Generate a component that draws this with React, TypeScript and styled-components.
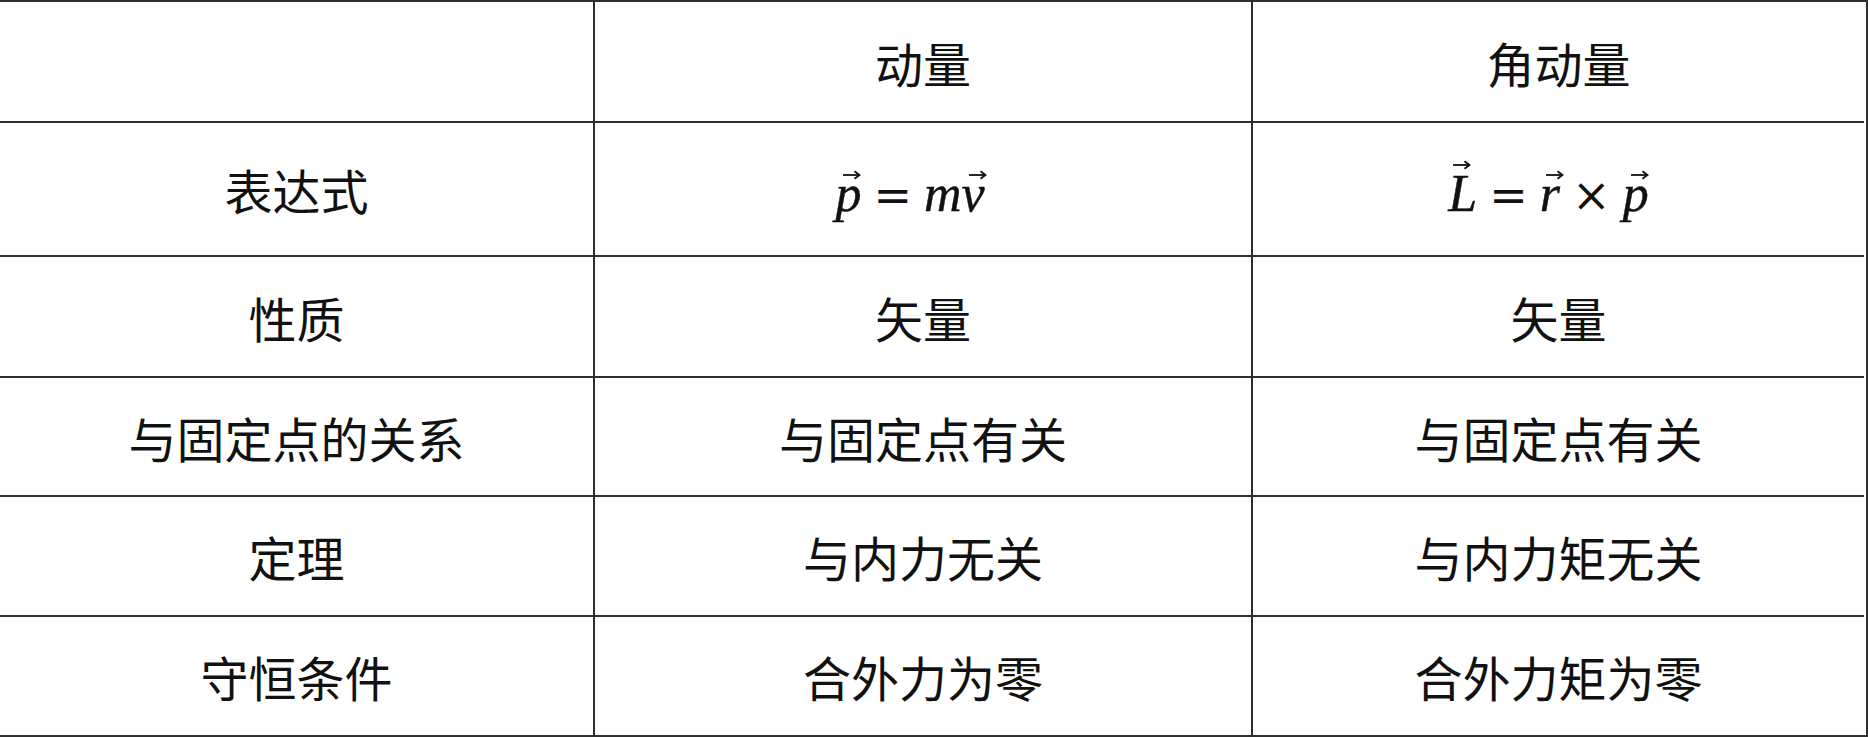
import React from "react";
import styled, { createGlobalStyle } from "styled-components";

const Global = createGlobalStyle`
  html, body { margin: 0; padding: 0; background: #ffffff; }
  body { font-family: "Noto Sans CJK SC", "Noto Sans", sans-serif; color: #111; }
`;

const LINE = "#2e2e2e";

const Table = styled.div`
  box-sizing: border-box;
  width: 1868px;
  height: 737px;
  display: grid;
  grid-template-columns: 595px 658px 611px;
  grid-template-rows: 121px 134px 121px 119px 120px 118px;
  border-top: 2px solid ${LINE};
  border-right: 2px solid ${LINE};
  border-bottom: 2px solid ${LINE};
`;

const Cell = styled.div<{ $lastCol?: boolean; $lastRow?: boolean }>`
  box-sizing: border-box;
  display: flex;
  align-items: center;
  justify-content: center;
  border-right: ${(p) => (p.$lastCol ? "none" : `2px solid ${LINE}`)};
  border-bottom: ${(p) => (p.$lastRow ? "none" : `2px solid ${LINE}`)};
  font-family: "Noto Sans CJK SC", "Noto Sans", sans-serif;
  font-size: 48px;
  line-height: 1;
  color: #111;
`;

const Formula = styled.span<{ $shift?: number }>`
  font-family: "Liberation Serif", "DejaVu Serif", serif;
  font-size: 52px;
  line-height: 1;
  display: inline-flex;
  align-items: baseline;
  margin-left: ${(p) => p.$shift ?? 0}px;
  margin-top: 10px;
  -webkit-text-stroke: 0.4px #111;
`;

const Var = styled.span`
  font-style: italic;
`;

const Op = styled.span`
  font-family: "DejaVu Serif", serif;
  font-style: normal;
  font-size: 46px;
  margin: 0 12px;
  -webkit-text-stroke: 0;
`;

const VecBox = styled.span`
  position: relative;
  display: inline-block;
  font-style: italic;
`;

const Arrow = styled.svg<{ $top: number; $left: number }>`
  position: absolute;
  top: ${(p) => p.$top}px;
  left: ${(p) => p.$left}px;
  width: 19px;
  height: 10px;
  overflow: visible;
`;

function Vec({ ch, top = -2, left = 6 }: { ch: string; top?: number; left?: number }) {
  return (
    <VecBox>
      {ch}
      <Arrow $top={top} $left={left} viewBox="0 0 19 10">
        <path d="M1 5 H17" stroke="#111" strokeWidth="1.8" fill="none" />
        <path d="M12.5 1.2 L17.5 5 L12.5 8.8" stroke="#111" strokeWidth="1.8" fill="none" strokeLinejoin="miter" />
      </Arrow>
    </VecBox>
  );
}

type Row = [React.ReactNode, React.ReactNode, React.ReactNode];

const rows: Row[] = [
  ["", "动量", "角动量"],
  [
    "表达式",
    <Formula $shift={-26}>
      <Vec ch="p" top={2} left={7} />
      <Op>=</Op>
      <Var>m</Var>
      <Vec ch="v" top={2} left={6} />
    </Formula>,
    <Formula $shift={-20}>
      <Vec ch="L" top={-8} left={4} />
      <Op>=</Op>
      <Vec ch="r" top={2} left={5} />
      <Op>×</Op>
      <Vec ch="p" top={2} left={7} />
    </Formula>,
  ],
  ["性质", "矢量", "矢量"],
  ["与固定点的关系", "与固定点有关", "与固定点有关"],
  ["定理", "与内力无关", "与内力矩无关"],
  ["守恒条件", "合外力为零", "合外力矩为零"],
];

export default function App() {
  return (
    <>
      <Global />
      <Table>
        {rows.map((row, r) =>
          row.map((content, c) => (
            <Cell key={`${r}-${c}`} $lastCol={c === 2} $lastRow={r === rows.length - 1}>
              {content}
            </Cell>
          ))
        )}
      </Table>
    </>
  );
}
